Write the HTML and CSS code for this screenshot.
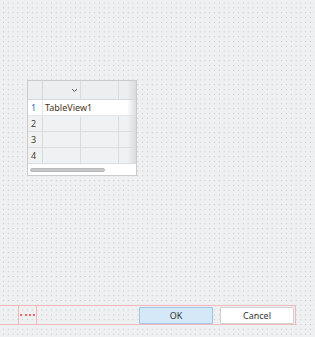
FILE: index.html
```html
<!DOCTYPE html>
<html lang="en">
<head>
    <meta charset="UTF-8">
    <title>Dialog form</title>
    <link rel="stylesheet" href="styles.css">
</head>
<body>
    <div class="form-canvas">
        <div class="table-view">
            <div class="tv-row tv-header">
                <div class="tv-corner"></div>
                <div class="tv-cell">
                    <svg class="chevron" width="7" height="5" viewBox="0 0 7 5"><polyline points="1,1 3.5,3.5 6,1" fill="none" stroke="#555" stroke-width="1"/></svg>
                </div>
                <div class="tv-cell"></div>
                <div class="tv-cell tv-last"></div>
            </div>
            <div class="tv-row tv-current">
                <div class="tv-num num-current">1</div>
                <div class="tv-cell tv-text">TableView1</div>
                <div class="tv-cell"></div>
                <div class="tv-cell tv-last"></div>
            </div>
            <div class="tv-row">
                <div class="tv-num">2</div>
                <div class="tv-cell"></div>
                <div class="tv-cell"></div>
                <div class="tv-cell tv-last"></div>
            </div>
            <div class="tv-row">
                <div class="tv-num">3</div>
                <div class="tv-cell"></div>
                <div class="tv-cell"></div>
                <div class="tv-cell tv-last"></div>
            </div>
            <div class="tv-row">
                <div class="tv-num">4</div>
                <div class="tv-cell"></div>
                <div class="tv-cell"></div>
                <div class="tv-cell tv-last"></div>
            </div>
            <div class="tv-scroll">
                <div class="tv-handle"></div>
            </div>
        </div>

        <div class="button-box">
            <div class="spacer"><div class="spacer-line"></div></div>
            <button class="btn btn-default">OK</button>
            <button class="btn">Cancel</button>
        </div>
    </div>
</body>
</html>
```

FILE: styles.css
```css
* {
    margin: 0;
    padding: 0;
    box-sizing: border-box;
}

body {
    font-family: "Noto Sans", "Open Sans", sans-serif;
    font-size: 9px;
    color: #333;
}

.form-canvas {
    width: 315px;
    height: 337px;
    padding-top: 80px;
    background-color: #eff0f1;
    background-image: radial-gradient(circle, #c2c3c4 0.5px, transparent 0.85px);
    background-size: 4.8px 4.8px;
    background-position: 1.1px 0.7px;
}

/* table view */
.table-view {
    position: relative;
    margin-left: 27px;
    width: 110px;
    height: 96px;
    border: 1px solid #c9cbcd;
    background-color: #fff;
    overflow: hidden;
}

.table-view::after {
    content: "";
    position: absolute;
    top: 0;
    right: 0;
    width: 9px;
    height: 83px;
    background: linear-gradient(to right, rgba(255,255,255,0), rgba(215,217,219,0.9));
}

.tv-row {
    display: flex;
    height: 16px;
    background-color: #f0f1f2;
}

.tv-header {
    height: 19px;
    background-color: #eceeef;
    border-bottom: 1px solid #d5d7d9;
}

.tv-current {
    background-color: #fff;
}

.tv-corner,
.tv-num {
    width: 15px;
    flex-shrink: 0;
    border-right: 1px solid #d5d7d9;
}

.tv-num {
    padding-left: 3px;
    line-height: 15px;
    color: #4a3a2a;
    border-bottom: 1px solid #dcdedf;
}

.num-current {
    color: #2d6fae;
}

.tv-cell {
    width: 38px;
    flex-shrink: 0;
    border-right: 1px solid #d9dbdc;
    border-bottom: 1px solid #dcdedf;
}

.tv-header .tv-cell {
    border-bottom: none;
    display: flex;
    align-items: center;
    justify-content: center;
    padding-left: 26px;
}

.tv-last {
    flex: 1;
    border-right: none;
}

.tv-text {
    padding-left: 2px;
    line-height: 15px;
    color: #4a3420;
    white-space: nowrap;
}

.tv-current .tv-cell {
    border-right-color: transparent;
    border-bottom: 1px solid #e4e5e6;
}

.tv-current .tv-num {
    border-right-color: #e6e7e8;
    border-bottom: 1px solid #e4e5e6;
}

.chevron {
    display: block;
    margin-top: 1px;
}

.tv-scroll {
    height: 13px;
    padding: 4px 0 0 2px;
}

.tv-handle {
    width: 75px;
    height: 4px;
    border-radius: 2px;
    background-color: #c6c7c8;
    border: 1px solid #b9babb;
}

/* button box */
.button-box {
    display: flex;
    align-items: center;
    width: 296px;
    height: 20px;
    margin-top: 129px;
    border: 1px solid #f2b9bb;
    border-left: none;
}

.spacer {
    display: flex;
    align-items: center;
    width: 19px;
    height: 18px;
    margin-left: 18px;
    border-left: 1px solid #f2b9bb;
    border-right: 1px solid #f2b9bb;
    padding: 0 1px;
}

.spacer-line {
    width: 100%;
    border-top: 2px dotted #f06a6e;
}

.btn {
    width: 74px;
    height: 17px;
    font-family: "Noto Sans", "Open Sans", sans-serif;
    font-size: 9px;
    color: #333;
    background-color: #fff;
    border: 1px solid #d0d2d3;
    border-radius: 1px;
}

.btn-default {
    margin-left: 102px;
    margin-right: 7px;
    background-color: #d4e8f7;
    border-color: #9dc5e6;
}
```
